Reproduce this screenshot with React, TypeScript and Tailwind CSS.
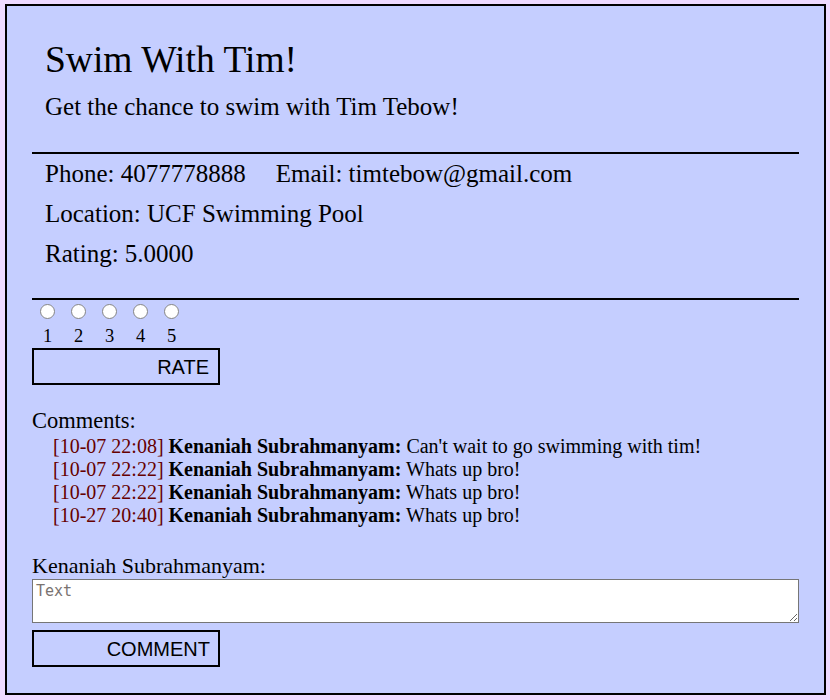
import React from "react";

const comments = [
  { t: "[10-07 22:08]", n: "Kenaniah Subrahmanyam:", m: "Can't wait to go swimming with tim!" },
  { t: "[10-07 22:22]", n: "Kenaniah Subrahmanyam:", m: "Whats up bro!" },
  { t: "[10-07 22:22]", n: "Kenaniah Subrahmanyam:", m: "Whats up bro!" },
  { t: "[10-27 20:40]", n: "Kenaniah Subrahmanyam:", m: "Whats up bro!" },
];

export default function App() {
  return (
    <div className="min-h-[700px] w-[830px] bg-[#eedaff] pt-[4px] pl-[5px] pr-[4px] font-['Liberation_Serif','Times_New_Roman',serif] text-black">
      <div className="border-2 border-black bg-[#c5ceff] px-[25px] pb-[26px]">
        <div className="pl-[13px] pt-[34px] pb-[25px]">
          <div className="text-[37.5px] leading-[40px]">Swim With Tim!</div>
          <div className="mt-[7px] text-[25px] leading-[40px]">Get the chance to swim with Tim Tebow!</div>
        </div>
        <div className="h-[2px] bg-black" />
        <div className="pl-[13px] pb-[24px] text-[25px] leading-[40px]">
          <div>
            <span>Phone: 4077778888</span>
            <span className="ml-[30px]">Email: timtebow@gmail.com</span>
          </div>
          <div>Location: UCF Swimming Pool</div>
          <div>Rating: 5.0000</div>
        </div>
        <div className="h-[2px] bg-black" />
        <div className="flex pt-[4px]">
          {[1, 2, 3, 4, 5].map((n) => (
            <label key={n} className="flex w-[31px] flex-col items-center">
              <input
                type="radio"
                name="rating"
                className="h-[15px] w-[15px] appearance-none rounded-full border border-[#858585] bg-white"
              />
              <span className="mt-[6px] text-[18.5px] leading-[22px]">{n}</span>
            </label>
          ))}
        </div>
        <button className="mt-[1px] flex h-[37px] w-[188px] items-center justify-end border-2 border-black bg-transparent pr-[9px] font-['Liberation_Sans',Arial,sans-serif] text-[20px]">
          RATE
        </button>
        <div className="mt-[25px] text-[22.5px] leading-[21px]">Comments:</div>
        <div className="mt-[4px] pl-[21px] text-[20px] leading-[23px]">
          {comments.map((c, i) => (
            <div key={i} className="whitespace-nowrap">
              <span className="text-[#660000]">{c.t}</span> <b>{c.n}</b> {c.m}
            </div>
          ))}
        </div>
        <div className="mt-[28px] text-[22px] leading-[22px]">Kenaniah Subrahmanyam:</div>
        <textarea
          placeholder="Text"
          className="mt-[2px] block h-[44px] w-full border border-[#767676] bg-white px-[3px] py-[2px] font-['DejaVu_Sans_Mono',monospace] text-[15px] leading-[18px] placeholder:text-[#7a7370]"
        />
        <button className="mt-[7px] flex h-[37px] w-[188px] items-center justify-end border-2 border-black bg-transparent pr-[8px] font-['Liberation_Sans',Arial,sans-serif] text-[20px]">
          COMMENT
        </button>
      </div>
    </div>
  );
}
